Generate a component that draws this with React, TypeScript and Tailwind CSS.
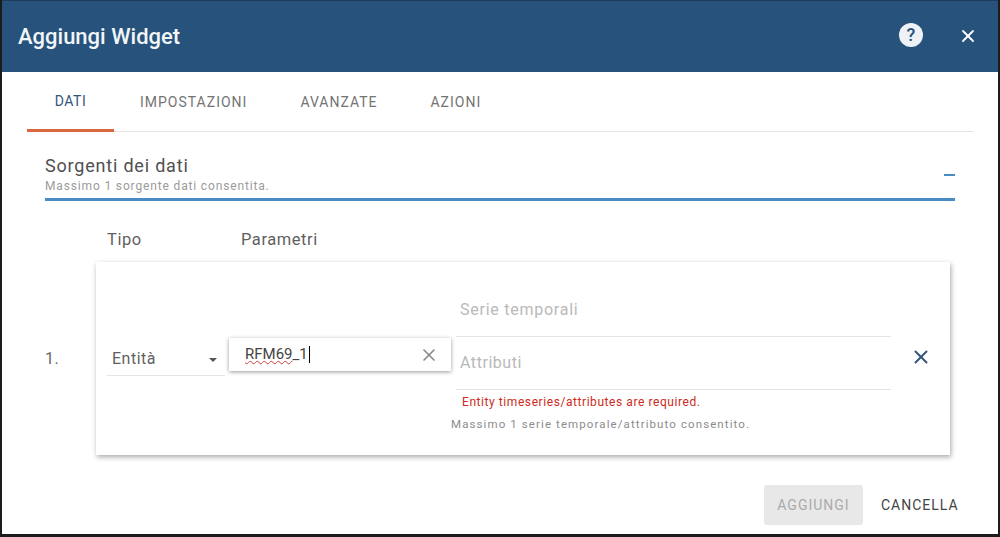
import { X } from "lucide-react";

const tabs = ["IMPOSTAZIONI", "AVANZATE", "AZIONI"];

function App() {
  return (
    <div className="h-[537px] w-[1000px] overflow-hidden bg-[#1c1c1c] font-['Roboto',sans-serif]">
      <div className="mx-[2px] flex h-[534px] w-[996px] flex-col bg-white">
        <div className="flex h-[72px] shrink-0 items-center justify-between border-t border-[#1d3c5a] bg-[#26527c] pl-[16px] pr-[20px]">
          <h1 className="text-[22px] font-medium text-[#f2f5f8]">
            Aggiungi Widget
          </h1>
          <div className="flex items-center gap-[35px]">
            <div className="mb-[3px] flex h-[24px] w-[24px] items-center justify-center rounded-full bg-[#eef1f6] text-[18px] font-medium leading-none text-[#26527c]">
              ?
            </div>
            <X className="mb-[1px] h-[20px] w-[20px] text-white" strokeWidth={2.2} />
          </div>
        </div>

        <div className="ml-[25px] mr-[25px] flex h-[60px] shrink-0 border-b border-[#e4e4e4]">
          <div className="flex h-[60px] w-[87px] items-center justify-center border-b-[3px] border-[#d9683f] pt-[2px] text-[14px] tracking-[0.5px] text-[#35567a]">
            DATI
          </div>
          <div className="ml-[26px] flex gap-[53px] text-[14px] tracking-[1px] text-[#747474]">
            {tabs.map((tab) => (
              <div key={tab} className="flex h-[60px] items-center pt-[1px]">
                {tab}
              </div>
            ))}
          </div>
        </div>

        <div className="mx-[43px] mt-[24px] flex h-[45px] shrink-0 items-start justify-between border-b-[3px] border-[#4a8cc4]">
          <div>
            <div className="text-[18px] leading-[20px] tracking-[0.8px] text-[#505050]">
              Sorgenti dei dati
            </div>
            <div className="mt-[4px] text-[12px] leading-[12px] tracking-[0.85px] text-[#9b9b9b]">
              Massimo 1 sorgente dati consentita.
            </div>
          </div>
          <div className="mt-[18px] h-[2px] w-[11px] bg-[#4a8cc4]"></div>
        </div>

        <div className="ml-[105px] mt-[29px] flex h-[20px] shrink-0 text-[16.5px] leading-[20px] tracking-[0.55px] text-[#5f5f5f]">
          <div className="w-[134px]">Tipo</div>
          <div>Parametri</div>
        </div>

        <div className="ml-[43px] mt-[12px] flex">
          <div className="w-[51px] shrink-0 self-center text-[16px] tracking-[0.5px] text-[#666]">
            1.
          </div>
          <div className="flex h-[193px] w-[854px] bg-white pl-[11px] shadow-[1px_2px_5px_rgba(0,0,0,0.35)]">
            <div className="mt-[84px] flex h-[30px] w-[118px] shrink-0 items-center justify-between border-b border-[#e6e6e6] pb-[3px] pl-[5px] pr-[8px] text-[16px] tracking-[0.5px] text-[#5f5f5f]">
              <span>Entità</span>
              <span className="mt-[2px] h-0 w-0 border-x-[4px] border-t-[4px] border-x-transparent border-t-[#555]"></span>
            </div>
            <div className="ml-[4px] mt-[76px] flex h-[33px] w-[222px] shrink-0 items-center justify-between pl-[16px] pr-[12px] shadow-[0_1px_4px_rgba(0,0,0,0.4)]">
              <div className="flex items-center text-[15px] text-[#444]">
                <span className="underline decoration-[#d04040] decoration-wavy decoration-1">
                  RFM69
                </span>
                <span>_1</span>
                <span className="ml-[1px] h-[17px] w-[1px] bg-black"></span>
              </div>
              <X className="h-[20px] w-[20px] text-[#8a8a8a]" strokeWidth={2} />
            </div>
            <div className="ml-[5px] flex w-[435px] shrink-0 flex-col">
              <div className="mt-[38px] flex h-[37px] items-center border-b border-[#e4e4e4] pb-[17px] pl-[4px] text-[16px] tracking-[0.75px] text-[#b9b9b9]">
                Serie temporali
              </div>
              <div className="flex h-[53px] items-center border-b border-[#e4e4e4] pl-[4px] text-[16px] tracking-[0.55px] text-[#b9b9b9]">
                Attributi
              </div>
              <div className="mt-[4px] pl-[6px] text-[12px] leading-[16px] tracking-[0.57px] text-[#cc2a1c]">
                Entity timeseries/attributes are required.
              </div>
              <div className="-ml-[5px] mt-[7px] text-[11.5px] leading-[14px] tracking-[1.1px] text-[#8c8c8c]">
                Massimo 1 serie temporale/attributo consentito.
              </div>
            </div>
            <X className="ml-[19px] mt-[84px] h-[22px] w-[22px] text-[#35567a]" strokeWidth={2.2} />
          </div>
        </div>

        <div className="ml-[762px] mt-[30px] flex items-center">
          <div className="flex h-[40px] w-[99px] items-center justify-center rounded-[3px] bg-[#e8e8e8] text-[14px] tracking-[1px] text-[#ababab]">
            AGGIUNGI
          </div>
          <div className="ml-[18px] text-[14px] tracking-[1px] text-[#444]">
            CANCELLA
          </div>
        </div>
      </div>
    </div>
  );
}

export default App;
